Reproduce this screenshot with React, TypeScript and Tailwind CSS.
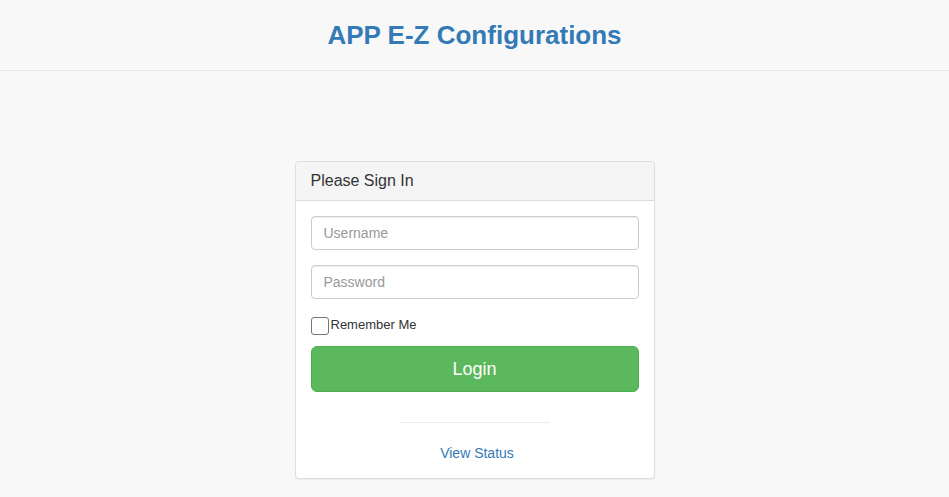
export default function App() {
  return (
    <div className="min-h-[497px] bg-[#f8f8f8] font-['Liberation_Sans',Arial,sans-serif] text-[14px] text-[#333]">
      <header className="flex h-[71px] items-center justify-center border-b border-[#e7e7e7]">
        <h2 className="text-[26px] font-bold text-[#337ab7]">APP E-Z Configurations</h2>
      </header>

      <div className="flex justify-center pt-[90px]">
        <div className="w-[360px] rounded border border-[#ddd] bg-white shadow-[0_1px_1px_rgba(0,0,0,0.05)]">
          <div className="flex h-[39px] items-center rounded-t border-b border-[#ddd] bg-[#f5f5f5] px-[15px] text-[16px]">
            Please Sign In
          </div>
          <form className="flex flex-col px-[15px] pt-[15px] pb-[14px]">
            <input
              placeholder="Username"
              className="h-[34px] rounded border border-[#ccc] px-3 text-[14px] shadow-[inset_0_1px_1px_rgba(0,0,0,0.075)] placeholder:text-[#999]"
            />
            <input
              type="password"
              placeholder="Password"
              className="mt-[15px] h-[34px] rounded border border-[#ccc] px-3 text-[14px] shadow-[inset_0_1px_1px_rgba(0,0,0,0.075)] placeholder:text-[#999]"
            />
            <label className="mt-[18px] flex items-center gap-[2px] text-[13px]">
              <span className="h-[18px] w-[18px] rounded-[3px] border border-[#767676] bg-white" />
              <span className="-mt-[2px]">Remember Me</span>
            </label>
            <button
              type="button"
              className="mt-[11px] h-[46px] rounded-[6px] border border-[#4cae4c] bg-[#5cb85c] text-[18px] text-white"
            >
              Login
            </button>
            <hr className="mx-auto mt-[30px] w-[150px] border-[#eee]" />
            <a className="mt-[20px] pl-[5px] text-center text-[14px] text-[#337ab7]">View Status</a>
          </form>
        </div>
      </div>
    </div>
  )
}
